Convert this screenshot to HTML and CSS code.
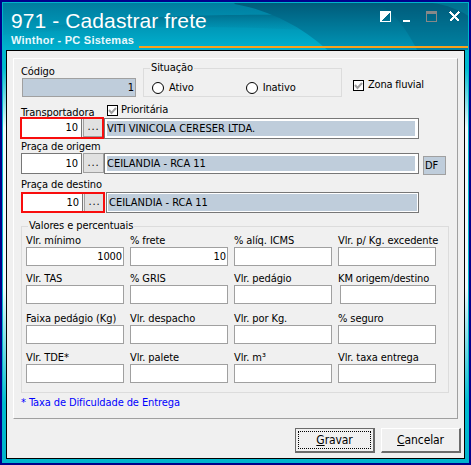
FILE: index.html
```html
<!DOCTYPE html>
<html lang="pt-BR">
<head>
<meta charset="utf-8">
<title>971 - Cadastrar frete</title>
<link rel="stylesheet" href="styles.css">
</head>
<body>
<div class="window">
  <header class="titlebar">
    <svg class="waves" viewBox="0 0 466 48" preserveAspectRatio="none">
      <defs>
        <linearGradient id="sky" x1="0" y1="0" x2="0" y2="1"><stop offset="0" stop-color="#007d9f"/><stop offset="1" stop-color="#00adcc"/></linearGradient>
        <linearGradient id="deep" x1="0" y1="0" x2="0" y2="1"><stop offset="0" stop-color="#005b7a"/><stop offset="1" stop-color="#0096b7"/></linearGradient>
        <linearGradient id="mid" x1="0" y1="0" x2="0" y2="1"><stop offset="0" stop-color="#0088a9"/><stop offset="1" stop-color="#00b2d0"/></linearGradient>
        <linearGradient id="band" x1="0" y1="0" x2="0" y2="1"><stop offset="0" stop-color="#006a89" stop-opacity=".8"/><stop offset="1" stop-color="#0092b2" stop-opacity="0"/></linearGradient>
      </defs>
      <rect width="466" height="48" fill="url(#sky)"/>
      <path d="M0 33C50 22 130 13 230 11L300 12L325 48H0Z" fill="url(#mid)"/>
      <path d="M0 33C60 18 150 11 300 12L312 28C200 22 90 24 0 33Z" fill="url(#band)"/>
      <path d="M232 1C270 8 300 25 325 48H466V0H232Z" fill="url(#deep)"/>
      <path d="M375 0C393 10 405 28 415 48H466V0Z" fill="#005f7e" opacity=".35"/>
      <path d="M430 0C445 2 457 7 466 13V0Z" fill="#00a0bd" opacity=".3"/>
    </svg>
    <div class="heading">
      <h1>971 - Cadastrar frete</h1>
      <div class="brand"><span>Winthor - PC Sistemas</span><i class="rule"></i></div>
    </div>
    <svg class="controls" width="82" height="12" viewBox="0 0 82 12" shape-rendering="crispEdges">
      <path d="M.5.5h10v10H.5z" fill="none" stroke="#fff"/><path d="M1 1h9L1 10z" fill="#fff"/>
      <path d="M23 9h7v2h-7z" fill="#fff"/>
      <path d="M46.500 1v9.500h10V1" fill="none" stroke="#888"/><path d="M46 0h11v3H46z" fill="#888"/>
      <path d="M70 1l9 9M79 1l-9 9" stroke="#fff" stroke-width="2.300"/>
    </svg>
  </header>
  <main class="body">
    <section class="panel">
      <div class="top">
        <div class="code"><label>Código</label><div class="input off">1</div></div>
        <fieldset class="status"><legend>Situação</legend>
          <span class="radio"><i></i>Ativo</span><span class="radio">
          <i></i>Inativo</span>
        </fieldset>
        <span class="check"><i class="box"><svg viewBox="0 0 9 9"><path d="M1 4l2.500 3L8 2"/></svg></i><span class="zona">Zona fluvial</span></span>
      </div>
      <div class="line carrier"><label>Transportadora</label>
        <span class="check"><i class="box"><svg viewBox="0 0 9 9"><path d="M1 4l2.500 3L8 2"/></svg></i>Prioritária</span></div>
      <div class="lookup one"><div class="pair marked"><b>10</b><button>...</button></div><div class="name"><span>VITI VINICOLA CERESER LTDA.</span></div></div>
      <div class="line origin"><label>Praça de origem</label></div>
      <div class="lookup two"><div class="pair"><b>10</b><button>...</button></div><div class="name"><span>CEILANDIA - RCA 11</span></div><div class="uf">DF</div></div>
      <div class="line dest"><label>Praça de destino</label></div>
      <div class="lookup three"><div class="pair marked"><b>10</b><button>...</button></div><div class="name"><span>CEILANDIA - RCA 11</span></div></div>
      <fieldset class="values"><legend>Valores e percentuais</legend>
        <div class="cell"><label>Vlr. mínimo</label><div class="input">1000</div></div>
        <div class="cell"><label>% frete</label><div class="input">10</div></div>
        <div class="cell"><label>% alíq. ICMS</label><div class="input"></div></div>
        <div class="cell"><label>Vlr. p/ Kg. excedente</label><div class="input"></div></div>
        <div class="cell"><label>Vlr. TAS</label><div class="input"></div></div>
        <div class="cell"><label>% GRIS</label><div class="input"></div></div>
        <div class="cell"><label>Vlr. pedágio</label><div class="input"></div></div>
        <div class="cell"><label>KM origem/destino</label><div class="input short"></div></div>
        <div class="cell"><label>Faixa pedágio (Kg)</label><div class="input"></div></div>
        <div class="cell"><label>Vlr. despacho</label><div class="input"></div></div>
        <div class="cell"><label>Vlr. por Kg.</label><div class="input"></div></div>
        <div class="cell"><label>% seguro</label><div class="input"></div></div>
        <div class="cell"><label>Vlr. TDE*</label><div class="input"></div></div>
        <div class="cell"><label>Vlr. palete</label><div class="input"></div></div>
        <div class="cell"><label>Vlr. m³</label><div class="input"></div></div>
        <div class="cell"><label>Vlr. taxa entrega</label><div class="input"></div></div>
      </fieldset>
      <p class="note">* Taxa de Dificuldade de Entrega</p>
    </section>
    <footer class="actions">
      <button class="btn primary"><span><u>G</u>ravar</span></button>
      <button class="btn"><span><u>C</u>ancelar</span></button>
    </footer>
  </main>
</div>
</body>
</html>
```
FILE: styles.css
```css
* { box-sizing: border-box; }
body {
  margin: 0;
  width: 471px;
  height: 465px;
  overflow: hidden;
  background: #00008b;
  font: 11px/14px "DejaVu Sans Condensed", "DejaVu Sans", sans-serif;
  font-stretch: condensed;
  letter-spacing: -0.1px;
  color: #000;
}
i, b { font-style: normal; font-weight: normal; }
label { display: block; white-space: nowrap; }
button { font: inherit; color: inherit; letter-spacing: inherit; padding: 0; border: 0; }
.window {
  margin: 2px;
  width: 467px;
  height: 461px;
  padding: 0 4px 4px;
  border: 1px solid #00b4cc;
  border-width: 1px 1px 2px;
  background: linear-gradient(#00a8c4 0, #00bccf 65px, #effbfc 125px, #effbfc 285px, #00bccf 400px, #00b4cc);
}
.titlebar { position: relative; height: 47px; margin: 0 -4px; display: flex; justify-content: space-between; }
.waves { position: absolute; width: 465px; height: 47px; }
.heading { position: relative; flex: 1; padding: 7px 0 0 8px; font-family: "Liberation Sans", sans-serif; color: #fff; }
h1 { margin: 0; font-size: 21px; line-height: 22px; font-weight: normal; letter-spacing: .1px; white-space: nowrap; }
.brand { display: flex; height: 16px; font-size: 11px; line-height: 16px; font-weight: bold; letter-spacing: .25px; color: #e7f8fc; white-space: nowrap; }
.brand span { width: 128px; }
.rule { flex: none; width: 329px; height: 2px; margin-top: 14px; background: #f9a11b; }
.controls { position: absolute; right: 6px; top: 8px; }
.body { width: 459px; height: 409px; margin-left: -1px; border: 1px solid #000; background: #f0f0f0; padding: 7px 6px 0; }
.panel { width: 445px; height: 361px; padding: 9px 8px 0 7px; border: 1px solid; border-color: #fff #a0a0a0 #a0a0a0 #fff; }
.top { display: flex; height: 30px; }
.code { width: 115px; margin-right: 7px; padding-left: 1px; }
.code label { height: 10px; line-height: 8px; margin-left: -1px; }
.input { height: 19px; border: 1px solid #a0a0a0; background: #fff; text-align: right; line-height: 17px; padding-right: 1px; }
.off { background: #bfcddb; }
fieldset { margin: 0; padding: 0; border: 1px solid #dcdcdc; min-width: 0; }
legend { padding: 0 1px; height: 14px; white-space: nowrap; }
.status { width: 199px; height: 36px; margin-top: -7px; padding-left: 8px; display: flex; gap: 52px; }
.status legend { margin-left: -2px; }
.radio { display: flex; align-items: center; height: 12px; margin-top: 7px; white-space: nowrap; }
.radio i { width: 12px; height: 12px; border: 1px solid #000; border-radius: 50%; background: #fff; margin-right: 5px; }
.check { display: flex; align-items: center; height: 12px; white-space: nowrap; }
.box { width: 11px; height: 11px; border: 1px solid #000; background: #fff; margin-right: 3px; }
.box svg { display: block; width: 9px; height: 9px; fill: none; stroke: #a0a0a0; stroke-width: 2; }
.top .check { margin: 11px 0 0 11px; }
.zona { margin-left: 1px; letter-spacing: -.2px; }
.line { display: flex; }
.carrier { height: 19px; }
.carrier label { width: 86px; padding-top: 8px; }
.carrier .check { margin-top: 6px; }
.lookup { display: flex; height: 22px; margin-left: -1px; }
.pair { position: relative; display: flex; width: 84px; height: 21px; }
.pair b { width: 61px; height: 21px; margin-left: 1px; border: 1px solid #777; background: #fff; text-align: right; line-height: 19px; padding-right: 3px; }
.pair button { width: 21px; height: 20px; margin-left: 1px; border: 1px solid #a0a0a0; background: #e1e1e1; letter-spacing: .8px; line-height: 16px; }
.marked::after { content: ""; position: absolute; inset: 0; border: 2px solid #f80d0d; }
.name { width: 315px; height: 21px; border: 1px solid #777; background: #fff; padding: 2px 3px 2px 2px; letter-spacing: 0; }
.name span { display: block; height: 15px; line-height: 15px; background: #bfcddb; white-space: nowrap; }
.one .marked { height: 22px; }
.one .name { margin-top: 1px; }
.origin { height: 14px; padding-top: 1px; }
.uf { width: 23px; height: 19px; margin: 3px 0 0 4px; border: 1px solid #a0a0a0; background: #bfcddb; padding-left: 1px; line-height: 17px; }
.dest { height: 17px; padding-top: 3px; }
.three { height: 27px; }
.three .pair { margin-left: 1px; }
.three .name { width: 313px; margin-left: 1px; padding: 1px; }
.three .name span { height: 17px; line-height: 17px; padding-left: 1px; }
.values { width: 428px; height: 174px; padding: 2px 11px 0 4px; display: grid; grid-template-columns: repeat(4, 98px); grid-template-rows: 38px 40px 39px 38px; column-gap: 6px; }
.values legend { margin-left: 2px; }
.cell label { height: 12px; line-height: 12px; }
.cell .short { margin-left: 2px; }
.note { margin: 3px 0 0; line-height: 14px; color: #00f; }
.actions { display: flex; justify-content: flex-end; gap: 6px; padding: 9px 0 0; margin-right: -3px; }
.btn { width: 80px; height: 25px; background: #f0f0f0; border: solid; border-width: 1px 2px 2px 1px; border-color: #fff #6b6b6b #6b6b6b #fff; font-size: 12px; letter-spacing: -.1px; }
.btn span { display: flex; align-items: center; justify-content: center; width: 100%; height: 100%; }
.primary { border-color: #6b6b6b; padding: 2px; }
.primary span { border: 1px dotted #000; }
```
